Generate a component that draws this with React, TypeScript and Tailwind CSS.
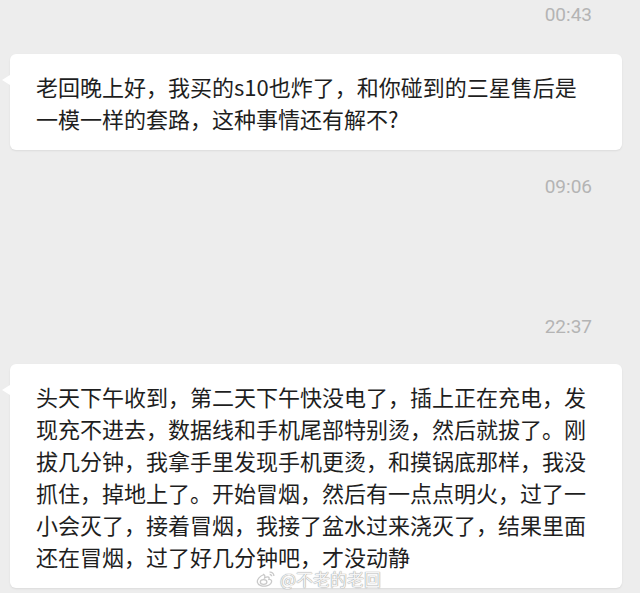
const cjk = "font-['Noto_Sans_CJK_SC','Noto_Sans',sans-serif]"

function Time({ children, className = '' }: { children: string; className?: string }) {
  return (
    <div className={`flex justify-end pr-[48px] font-['Roboto',sans-serif] text-[19px] leading-[22px] text-[#b4b4b4] ${className}`}>
      {children}
    </div>
  )
}

function Bubble({ lines, children }: { lines: string[]; children?: React.ReactNode }) {
  return (
    <div className="relative ml-[10px] mr-[18px] rounded-[6px] bg-white px-[26px] py-[16px] shadow-[0_1px_2px_rgba(0,0,0,0.08)]">
      {/* tail */}
      <div className="absolute left-[-8px] top-[21px] h-0 w-0 border-y-[5px] border-r-[8px] border-y-transparent border-r-white" />
      <p className={`${cjk} whitespace-nowrap text-[22px] leading-[32px] text-[#1e1e1e]`}>
        {lines.map((l, i) => (
          <span key={i} className="block">{l}</span>
        ))}
      </p>
      {children}
    </div>
  )
}

function WeiboLogo() {
  return (
    <svg width="22" height="18" viewBox="0 0 22 18" fill="none" stroke="#c9c9c9" strokeWidth="1.3">
      <path d="M9 4.5C5 6 1.8 9.3 2.3 12.2c.6 3.2 5.4 4.6 9.4 3.6 3.6-.9 5.6-3.3 4.8-5.2-.5-1.1-1.9-1.3-2.6-1.2.5-1.3.3-2.2-.8-2.4-1.2-.2-2.8.6-3.5 1 .4-1.2.6-2.4-.4-3.1-.3-.2-.8-.3-1.2-.4z" />
      <ellipse cx="8.6" cy="12" rx="3.3" ry="2.3" />
      <path d="M14.5 2.2c2.3-.4 4.4 1.3 4.4 3.8" />
      <path d="M14.7 4.5c1.1-.1 2 .7 2 1.8" />
    </svg>
  )
}

export default function App() {
  return (
    <div className="h-[593px] w-[640px] overflow-hidden bg-[#ededed] pt-[4px]">
      <Time>00:43</Time>

      <div className="mt-[28px]">
        <Bubble
          lines={[
            '老回晚上好，我买的s10也炸了，和你碰到的三星售后是',
            '一模一样的套路，这种事情还有解不?',
          ]}
        />
      </div>

      <Time className="mt-[26px]">09:06</Time>
      <Time className="mt-[118px]">22:37</Time>

      <div className="mt-[26px]">
        <Bubble
          lines={[
            '头天下午收到，第二天下午快没电了，插上正在充电，发',
            '现充不进去，数据线和手机尾部特别烫，然后就拔了。刚',
            '拔几分钟，我拿手里发现手机更烫，和摸锅底那样，我没',
            '抓住，掉地上了。开始冒烟，然后有一点点明火，过了一',
            '小会灭了，接着冒烟，我接了盆水过来浇灭了，结果里面',
            '还在冒烟，过了好几分钟吧，才没动静',
          ]}
        >
          {/* watermark */}
          <div className="absolute bottom-0 left-[245px] flex items-center gap-[3px]">
            <WeiboLogo />
            <span className={`${cjk} text-[17px] leading-[14px] text-[#f4f4f4] [text-shadow:0_0_1px_#9a9a9a,0_0_1px_#9a9a9a]`}>
              @不老的老回
            </span>
          </div>
        </Bubble>
      </div>
    </div>
  )
}
